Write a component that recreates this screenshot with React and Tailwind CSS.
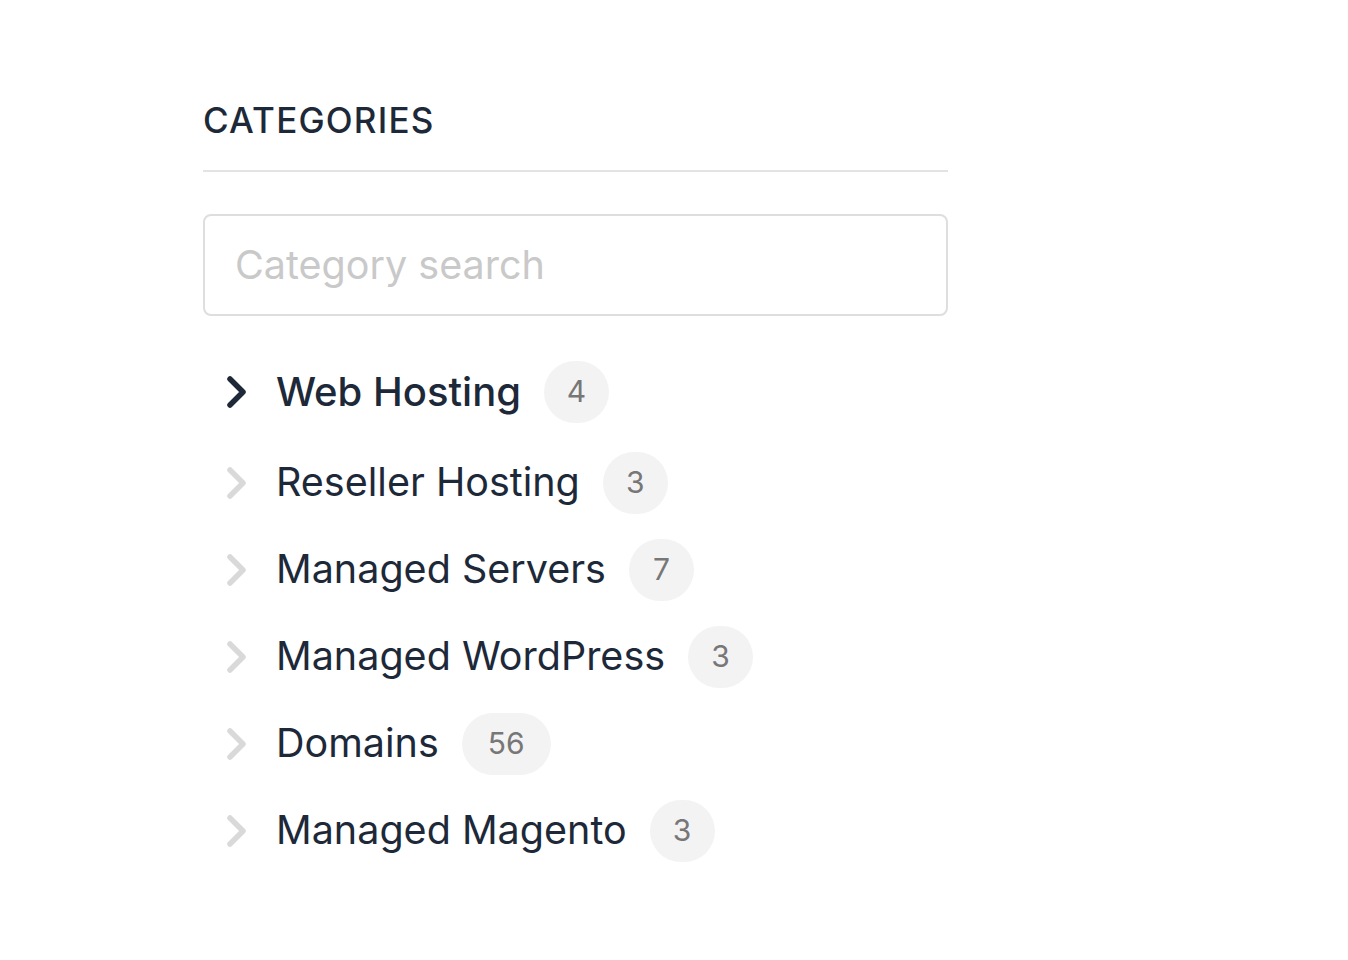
import React from "react";

const categories = [
  { name: "Web Hosting", count: 4, active: true },
  { name: "Reseller Hosting", count: 3 },
  { name: "Managed Servers", count: 7 },
  { name: "Managed WordPress", count: 3 },
  { name: "Domains", count: 56 },
  { name: "Managed Magento", count: 3 },
];

function Chevron({ active }) {
  return (
    <svg
      width="24"
      height="40"
      viewBox="0 0 24 40"
      fill="none"
      stroke={active ? "#1d2939" : "#d9d9d9"}
      strokeWidth="5.5"
      strokeLinecap="round"
      strokeLinejoin="round"
    >
      <path d="M7 7 L20 20 L7 33" />
    </svg>
  );
}

export default function App() {
  return (
    <div
      className="min-h-screen bg-white pt-[96px] pl-[203px]"
      style={{ fontFamily: "Inter, 'Noto Sans', sans-serif" }}
    >
      <div className="w-[745px]">
        <h2 className="text-[35px] leading-[48px] font-medium text-[#1d2939] tracking-[1.2px]">
          CATEGORIES
        </h2>
        <div className="mt-[26px] h-[2px] bg-[#e3e3e3]" />

        <div className="mt-[42px]">
          <input
            type="text"
            placeholder="Category search"
            className="w-full h-[102px] rounded-[8px] border-2 border-[#dedede] px-[30px] text-[39.5px] text-[#1d2939] placeholder:text-[#c9c9c9] outline-none"
          />
        </div>

        <ul className="mt-[32px] flex flex-col">
          {categories.map((c) => (
            <li
              key={c.name}
              className={`flex items-center h-[87px] pl-[20px] ${c.active ? "mb-[4px]" : ""}`}
            >
              <Chevron active={c.active} />
              <span
                className={`ml-[29px] text-[39.5px] text-[#1d2939] ${c.active ? "font-medium text-[40px]" : "font-normal"}`}
              >
                {c.name}
              </span>
              <span
                className={`ml-[23px] h-[62px] rounded-full bg-[#f3f3f3] flex items-center justify-center text-[30px] text-[#777777] ${c.count >= 10 ? "px-[26px]" : "w-[65px]"}`}
              >
                {c.count}
              </span>
            </li>
          ))}
        </ul>
      </div>
    </div>
  );
}
